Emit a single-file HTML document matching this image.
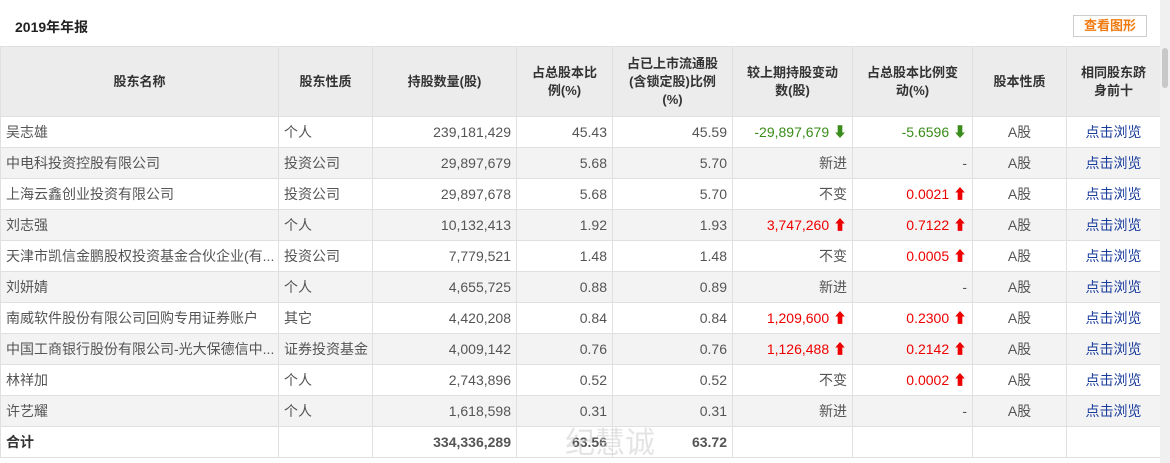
<!DOCTYPE html>
<html><head><meta charset="utf-8"><style>
body{margin:0;width:1170px;height:463px;overflow:hidden;background:#fff;font-family:"Liberation Sans","Noto Sans CJK SC",sans-serif;color:#555;position:relative}
.title{position:absolute;left:15px;top:17px;font-size:14px;font-weight:bold;color:#222}
.btn{position:absolute;left:1073px;top:15px;width:74px;height:22px;border:1px solid #ccc;box-sizing:border-box;color:#f07b10;font-size:13px;font-weight:bold;text-align:center;line-height:20px}
table{position:absolute;left:0;top:46px;border-collapse:collapse;table-layout:fixed;width:1160px;font-size:14px}
td,th{border:1px solid #e0e0e0;padding:0 5px;height:30px;white-space:nowrap;overflow:hidden}
th{background:#ececec;height:69px;font-weight:bold;color:#333;text-align:center;white-space:normal;line-height:18px;padding:0 10px;font-size:13px}
tr:nth-child(odd) td{background:#f3f3f3}
.r{text-align:right}.c{text-align:center}
.g{color:#3a8c1a}.red{color:#e00}
.l{color:#1a3d9c;text-align:center}
.ar{font-weight:bold;font-size:14px}
.sb{position:absolute;left:1160px;top:0;width:10px;height:463px;background:#f0f0f0}
.sb div{position:absolute;left:2px;top:48px;width:6px;height:40px;background:#c8c8c8;border-radius:3px}
.wm{position:absolute;left:565px;top:418px;font-size:30px;color:rgba(210,210,210,.6)}
</style></head><body>
<div class="title">2019年年报</div>
<div class="btn">查看图形</div>
<table>
<colgroup><col style="width:278px"><col style="width:94px"><col style="width:144px"><col style="width:96px"><col style="width:120px"><col style="width:120px"><col style="width:120px"><col style="width:94px"><col style="width:94px"></colgroup>
<tr><th>股东名称</th><th>股东性质</th><th>持股数量(股)</th><th>占总股本比例(%)</th><th>占已上市流通股(含锁定股)比例(%)</th><th>较上期持股变动数(股)</th><th>占总股本比例变动(%)</th><th>股本性质</th><th>相同股东跻身前十</th></tr>
<tr><td>吴志雄</td><td>个人</td><td class="r">239,181,429</td><td class="r">45.43</td><td class="r">45.59</td><td class="r g">-29,897,679 <span class="ar">⬇</span></td><td class="r g">-5.6596 <span class="ar">⬇</span></td><td class="c">A股</td><td class="l">点击浏览</td></tr>
<tr><td>中电科投资控股有限公司</td><td>投资公司</td><td class="r">29,897,679</td><td class="r">5.68</td><td class="r">5.70</td><td class="r">新进</td><td class="r">-</td><td class="c">A股</td><td class="l">点击浏览</td></tr>
<tr><td>上海云鑫创业投资有限公司</td><td>投资公司</td><td class="r">29,897,678</td><td class="r">5.68</td><td class="r">5.70</td><td class="r">不变</td><td class="r red">0.0021 <span class="ar">⬆</span></td><td class="c">A股</td><td class="l">点击浏览</td></tr>
<tr><td>刘志强</td><td>个人</td><td class="r">10,132,413</td><td class="r">1.92</td><td class="r">1.93</td><td class="r red">3,747,260 <span class="ar">⬆</span></td><td class="r red">0.7122 <span class="ar">⬆</span></td><td class="c">A股</td><td class="l">点击浏览</td></tr>
<tr><td>天津市凯信金鹏股权投资基金合伙企业(有...</td><td>投资公司</td><td class="r">7,779,521</td><td class="r">1.48</td><td class="r">1.48</td><td class="r">不变</td><td class="r red">0.0005 <span class="ar">⬆</span></td><td class="c">A股</td><td class="l">点击浏览</td></tr>
<tr><td>刘妍婧</td><td>个人</td><td class="r">4,655,725</td><td class="r">0.88</td><td class="r">0.89</td><td class="r">新进</td><td class="r">-</td><td class="c">A股</td><td class="l">点击浏览</td></tr>
<tr><td>南威软件股份有限公司回购专用证券账户</td><td>其它</td><td class="r">4,420,208</td><td class="r">0.84</td><td class="r">0.84</td><td class="r red">1,209,600 <span class="ar">⬆</span></td><td class="r red">0.2300 <span class="ar">⬆</span></td><td class="c">A股</td><td class="l">点击浏览</td></tr>
<tr><td>中国工商银行股份有限公司-光大保德信中...</td><td>证券投资基金</td><td class="r">4,009,142</td><td class="r">0.76</td><td class="r">0.76</td><td class="r red">1,126,488 <span class="ar">⬆</span></td><td class="r red">0.2142 <span class="ar">⬆</span></td><td class="c">A股</td><td class="l">点击浏览</td></tr>
<tr><td>林祥加</td><td>个人</td><td class="r">2,743,896</td><td class="r">0.52</td><td class="r">0.52</td><td class="r">不变</td><td class="r red">0.0002 <span class="ar">⬆</span></td><td class="c">A股</td><td class="l">点击浏览</td></tr>
<tr><td>许艺耀</td><td>个人</td><td class="r">1,618,598</td><td class="r">0.31</td><td class="r">0.31</td><td class="r">新进</td><td class="r">-</td><td class="c">A股</td><td class="l">点击浏览</td></tr>
<tr><td style="font-weight:bold;color:#333">合计</td><td></td><td class="r" style="font-weight:bold">334,336,289</td><td class="r" style="font-weight:bold">63.56</td><td class="r" style="font-weight:bold">63.72</td><td></td><td></td><td></td><td></td></tr>
</table>
<div class="wm">纪慧诚</div>
<div class="sb"><div></div></div>
</body></html>
